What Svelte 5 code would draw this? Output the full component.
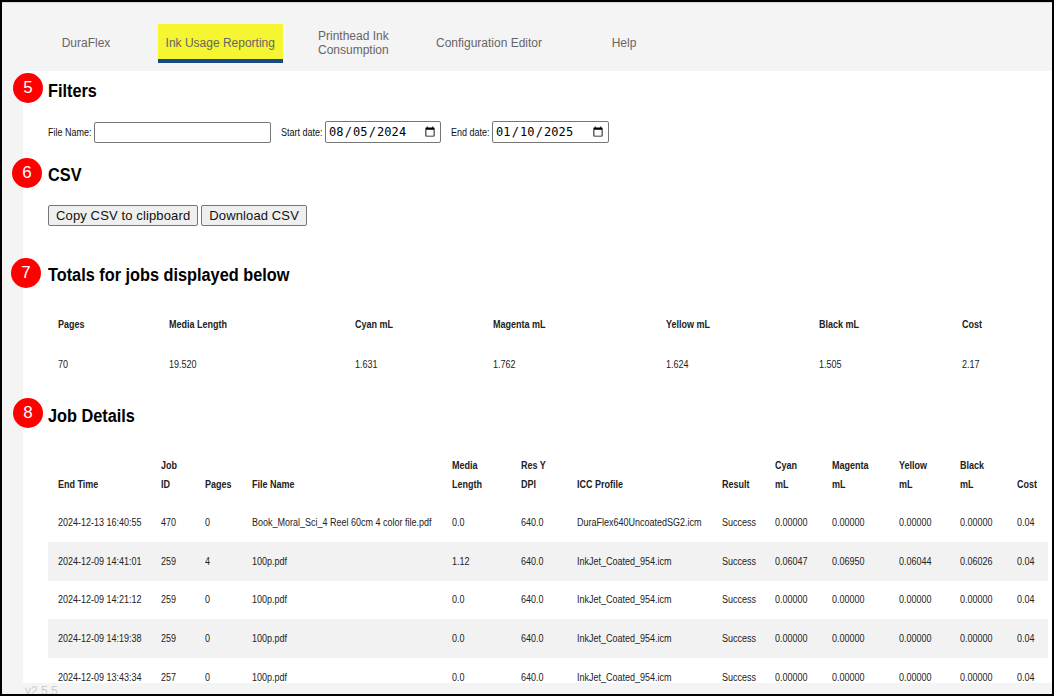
<script>
  const tabs = [
    { label: 'DuraFlex' },
    { label: 'Ink Usage Reporting', active: true },
    { label: 'Printhead Ink Consumption', wrap: true },
    { label: 'Configuration Editor' },
    { label: 'Help' }
  ];
  const totalsHead = ['Pages', 'Media Length', 'Cyan mL', 'Magenta mL', 'Yellow mL', 'Black mL', 'Cost'];
  const totalsRow = ['70', '19.520', '1.631', '1.762', '1.624', '1.505', '2.17'];
  const totalsWidths = [111, 186, 138, 173, 153, 143, 96];
  const head = ['End Time', 'Job\nID', 'Pages', 'File Name', 'Media\nLength', 'Res Y\nDPI', 'ICC Profile', 'Result', 'Cyan\nmL', 'Magenta\nmL', 'Yellow\nmL', 'Black\nmL', 'Cost'];
  const widths = [103, 44, 47, 200, 69, 56, 145, 53, 57, 67, 61, 57, 41];
  const zero = '0.00000';
  const ink = 'InkJet_Coated_954.icm';
  const rows = [
    ['2024-12-13 16:40:55', '470', '0', 'Book_Moral_Sci_4 Reel 60cm 4 color file.pdf', '0.0', '640.0', 'DuraFlex640UncoatedSG2.icm', 'Success', zero, zero, zero, zero, '0.04'],
    ['2024-12-09 14:41:01', '259', '4', '100p.pdf', '1.12', '640.0', ink, 'Success', '0.06047', '0.06950', '0.06044', '0.06026', '0.04'],
    ['2024-12-09 14:21:12', '259', '0', '100p.pdf', '0.0', '640.0', ink, 'Success', zero, zero, zero, zero, '0.04'],
    ['2024-12-09 14:19:38', '259', '0', '100p.pdf', '0.0', '640.0', ink, 'Success', zero, zero, zero, zero, '0.04'],
    ['2024-12-09 13:43:34', '257', '0', '100p.pdf', '0.0', '640.0', ink, 'Success', zero, zero, zero, zero, '0.04']
  ];
</script>

<div class="frame">
  <nav class="tabs">
    {#each tabs as t}
      <a class="tab" class:active={t.active} class:wrap={t.wrap} href="#top">{t.label}</a>
    {/each}
  </nav>

  <div class="body">
    <main class="content">
      <section class="filters">
        <span class="badge b5">5</span>
        <h2>Filters</h2>
        <form class="filter-row">
          <label class="lbl l-file" for="fn"><span>File Name:</span></label>
          <input id="fn" class="text" type="text" />
          <label class="lbl l-start" for="sd"><span>Start date:</span></label>
          <input id="sd" class="date" type="date" value="2024-08-05" />
          <label class="lbl l-end" for="ed"><span>End date:</span></label>
          <input id="ed" class="date" type="date" value="2025-01-10" />
        </form>
      </section>

      <section class="csv">
        <span class="badge b6">6</span>
        <h2>CSV</h2>
        <div class="btns">
          <button type="button">Copy CSV to clipboard</button>
          <button type="button">Download CSV</button>
        </div>
      </section>

      <section class="totals">
        <span class="badge b7">7</span>
        <h2>Totals for jobs displayed below</h2>
        <table class="t-totals">
          <colgroup>
            {#each totalsWidths as w}<col style="width:{w}px" />{/each}
          </colgroup>
          <thead>
            <tr>{#each totalsHead as h}<th><span>{h}</span></th>{/each}</tr>
          </thead>
          <tbody>
            <tr>{#each totalsRow as c}<td><span>{c}</span></td>{/each}</tr>
          </tbody>
        </table>
      </section>

      <section class="jobs">
        <span class="badge b8">8</span>
        <h2>Job Details</h2>
        <table class="t-jobs">
          <colgroup>
            {#each widths as w}<col style="width:{w}px" />{/each}
          </colgroup>
          <thead>
            <tr>{#each head as h}<th><span>{h}</span></th>{/each}</tr>
          </thead>
          <tbody>
            {#each rows as r}
              <tr>{#each r as c}<td><span>{c}</span></td>{/each}</tr>
            {/each}
          </tbody>
        </table>
      </section>
    </main>
  </div>
  <footer class="foot"><span>v2.5.5</span></footer>
</div>

<style>
  :global(body) {
    margin: 0;
    background: #000;
  }
  .frame {
    box-sizing: border-box;
    width: 1054px;
    height: 696px;
    border: 2px solid #000;
    background: #f4f4f4;
    display: flex;
    flex-direction: column;
    overflow: hidden;
    font-family: "Liberation Sans", Arial, sans-serif;
    color: #111;
  }
  .tabs {
    flex: none;
    height: 69px;
    display: flex;
    align-items: flex-start;
    box-sizing: border-box;
    padding-top: 22px;
    box-shadow: inset 0 1px #d8d8d8;
  }
  .tab {
    box-sizing: border-box;
    height: 39px;
    display: flex;
    align-items: center;
    justify-content: center;
    text-align: center;
    font-size: 12px;
    line-height: 14px;
    color: #666;
    text-decoration: none;
    padding-top: 3px;
    border-bottom: 4px solid transparent;
    white-space: nowrap;
  }
  .tab:nth-child(1) { width: 124px; margin-left: 22px; }
  .tab:nth-child(2) { width: 124.5px; margin-left: 10px; }
  .tab:nth-child(3) { width: 134px; margin-left: 5.5px; }
  .tab:nth-child(4) { width: 124px; margin-left: 5px; }
  .tab:nth-child(5) { width: 124px; margin-left: 11px; }
  .tab.wrap { white-space: normal; padding: 3px 30px 0; text-align: left; }
  .tab.active {
    background: #f5f531;
    border-bottom-color: #174a85;
  }
  .body {
    flex: 1;
    min-height: 0;
    padding-left: 21px;
    display: flex;
    overflow: hidden;
  }
  .content {
    flex: 1;
    background: #fff;
    padding-left: 25px;
    padding-right: 4px;
  }
  section { position: relative; box-sizing: border-box; }
  h2 {
    margin: 0;
    font-size: 18px;
    line-height: 22px;
    font-weight: 700;
    color: #000;
    transform: scaleX(0.905);
    transform-origin: left center;
  }
  .badge {
    position: absolute;
    z-index: 1;
    width: 30px;
    height: 30px;
    border-radius: 50%;
    background: #f00;
    color: #fff;
    font-size: 17px;
    line-height: 29px;
    text-align: center;
  }
  .filters { padding-top: 9px; height: 84px; }
  .csv { padding-top: 9px; height: 101px; }
  .totals { padding-top: 8px; height: 139px; }
  .jobs { padding-top: 10px; }
  .b5 { left: -35px; top: 2px; }
  .b6 { left: -36px; top: 3px; }
  .b7 { left: -37px; top: 2px; }
  .b8 { left: -35px; top: 3px; }
  .filter-row {
    display: flex;
    align-items: center;
    height: 22px;
    margin-top: 19px;
  }
  .lbl {
    flex: none;
    font-size: 10px;
    color: #111;
    white-space: nowrap;
  }
  .lbl span {
    display: inline-block;
    transform: scaleX(0.9);
    transform-origin: left center;
  }
  .l-file { width: 46px; }
  .l-start { width: 44px; margin-left: 10px; }
  .l-end { width: 41px; margin-left: 10px; }
  .text {
    box-sizing: border-box;
    width: 177px;
    height: 21px;
    border: 1px solid #767676;
    border-radius: 2px;
    padding: 1px 2px;
    background: #fff;
  }
  .date {
    box-sizing: border-box;
    width: 116px;
    height: 22px;
    border: 1px solid #767676;
    border-radius: 2px;
    padding: 1px 2px;
    background: #fff;
    font-family: "DejaVu Sans Mono", monospace;
    font-size: 12px;
    letter-spacing: 0.1px;
    color: #000;
  }
  .date:last-child { width: 117px; }
  .btns {
    display: flex;
    gap: 3px;
    margin-top: 19px;
  }
  button {
    box-sizing: border-box;
    height: 21px;
    padding: 0 7px;
    border: 1px solid #767676;
    border-radius: 2px;
    background: #efefef;
    color: #111;
    font-family: "Liberation Sans", Arial, sans-serif;
    font-size: 13px;
    letter-spacing: 0.13px;
    white-space: nowrap;
  }
  table {
    border-collapse: collapse;
    table-layout: fixed;
    width: 1000px;
    font-size: 10px;
    color: #222;
  }
  th, td {
    padding: 0 0 0 10px;
    text-align: left;
    white-space: nowrap;
  }
  th span, td span {
    display: inline-block;
    transform: scaleX(0.9);
    transform-origin: left center;
  }
  th { font-weight: 700; }
  .t-totals { margin-top: 19px; }
  .t-totals th { height: 39px; }
  .t-totals td { height: 40px; }
  .t-jobs { margin-top: 29px; }
  .t-jobs th {
    white-space: pre-line;
    vertical-align: bottom;
    line-height: 19px;
    padding-bottom: 9px;
    height: 38px;
  }
  .t-jobs td { height: 38.75px; }
  .t-jobs tbody tr:nth-child(even) { background: #f2f2f2; }
  .foot {
    flex: none;
    height: 11px;
    overflow: hidden;
    background: #f4f4f4;
    padding-left: 23px;
    font-size: 12px;
    line-height: 16px;
    color: #ccc;
  }
</style>
